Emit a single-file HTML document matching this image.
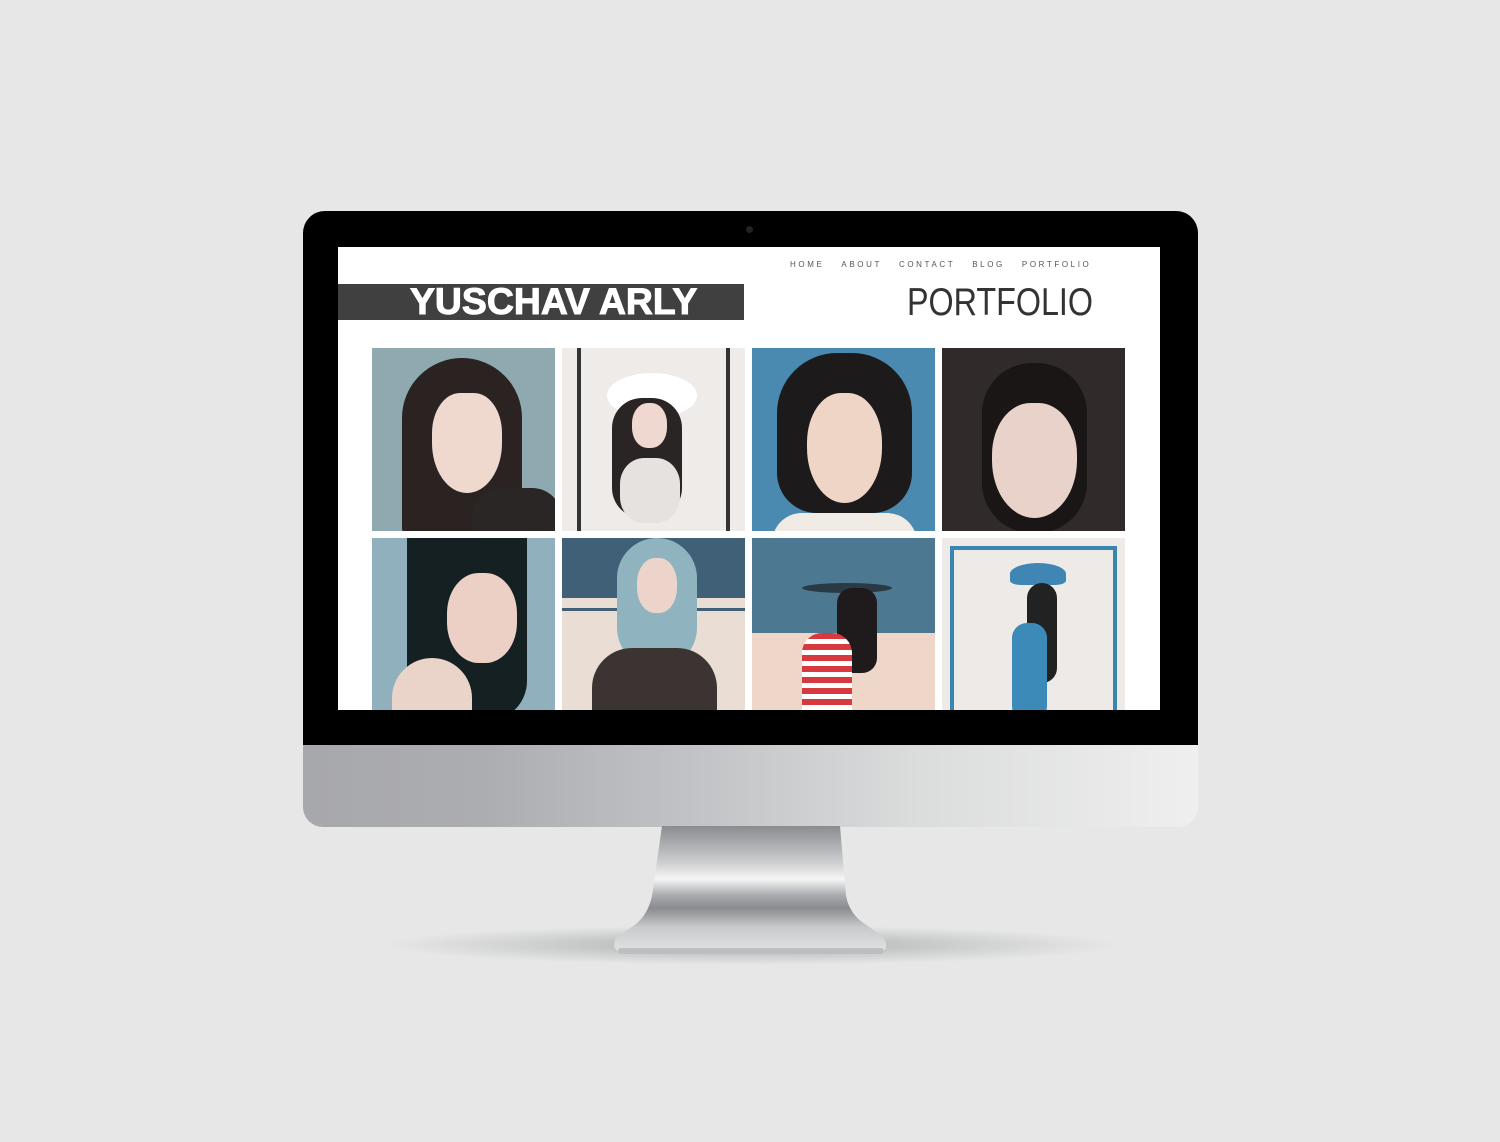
<!DOCTYPE html>
<html><head><meta charset="utf-8"><style>
*{margin:0;padding:0;box-sizing:border-box}
body{width:1500px;height:1142px;background:#e6e7e6;position:relative;overflow:hidden;font-family:"Liberation Sans",sans-serif}
.abs{position:absolute}
#bezel{left:303px;top:211px;width:895px;height:535px;background:#000;border-radius:22px 22px 0 0}
#chin{left:303px;top:745px;width:895px;height:82px;border-radius:0 0 20px 20px;background:linear-gradient(90deg,#a7a8ac 0%,#acadb1 20%,#c3c4c7 45%,#dcdddd 70%,#eeefee 100%)}
#screen{left:338px;top:247px;width:822px;height:463px;background:#fff;overflow:hidden}
#cam{left:746px;top:226px;width:7px;height:7px;border-radius:50%;background:#222}
.nav{position:absolute;top:13px;left:452px;font-size:8px;letter-spacing:2.6px;color:#555;white-space:nowrap}
.nav span{margin-right:17px}
#bar{left:0;top:37px;width:406px;height:36px;background:#404041}
#bar div{position:absolute;left:72px;top:-3px;color:#fff;font-weight:bold;font-size:37px;letter-spacing:0;transform:scaleX(1.01);transform-origin:left;-webkit-text-stroke:1px #fff;white-space:nowrap}
#pf{left:569px;top:34px;font-size:39px;font-weight:normal;color:#333;transform:scaleX(.828);transform-origin:left;white-space:nowrap}
.t{position:absolute;width:183px;height:183px;overflow:hidden}
.t div{position:absolute}
</style></head><body>
<div id="bezel" class="abs"></div>
<div id="cam" class="abs"></div>
<div id="screen" class="abs">
 <div class="nav"><span>HOME</span><span>ABOUT</span><span>CONTACT</span><span>BLOG</span><span>PORTFOLIO</span></div>
 <div id="bar" class="abs"><div>YUSCHAV ARLY</div></div>
 <div id="pf" class="abs">PORTFOLIO</div>
 <div class="t" style="left:34px;top:101px;background:#8fa9b0">
  <div style="left:30px;top:10px;width:120px;height:180px;background:#2a2322;border-radius:60px 60px 10px 10px"></div>
  <div style="left:60px;top:45px;width:70px;height:100px;background:#efd9cf;border-radius:40% 40% 50% 50%"></div>
  <div style="left:100px;top:140px;width:90px;height:50px;background:#2b2626;border-radius:30px 30px 0 0"></div>
 </div>
 <div class="t" style="left:224px;top:101px;background:#eeebe8">
  <div style="left:15px;top:0;width:4px;height:183px;background:#333"></div>
  <div style="left:164px;top:0;width:4px;height:183px;background:#333"></div>
  <div style="left:45px;top:25px;width:90px;height:45px;background:#fff;border-radius:50%"></div>
  <div style="left:50px;top:50px;width:70px;height:120px;background:#2a2424;border-radius:30px"></div>
  <div style="left:70px;top:55px;width:35px;height:45px;background:#eed8cf;border-radius:45%"></div>
  <div style="left:58px;top:110px;width:60px;height:65px;background:#e5e2e0;border-radius:40%"></div>
 </div>
 <div class="t" style="left:414px;top:101px;background:#4a8ab0">
  <div style="left:25px;top:5px;width:135px;height:160px;background:#1d1a1b;border-radius:60px 60px 40px 40px"></div>
  <div style="left:55px;top:45px;width:75px;height:110px;background:#efd5c6;border-radius:45% 45% 50% 50%"></div>
  <div style="left:20px;top:165px;width:145px;height:30px;background:#f1ebe6;border-radius:30px 30px 0 0"></div>
 </div>
 <div class="t" style="left:604px;top:101px;background:#302b2a">
  <div style="left:40px;top:15px;width:105px;height:170px;background:#1a1616;border-radius:50px"></div>
  <div style="left:50px;top:55px;width:85px;height:115px;background:#e8d2ca;border-radius:45% 45% 50% 50%"></div>
 </div>
 <div class="t" style="left:34px;top:291px;background:#8fb0bc">
  <div style="left:35px;top:0;width:120px;height:183px;background:#142022;border-radius:0 0 40px 40px"></div>
  <div style="left:75px;top:35px;width:70px;height:90px;background:#ecd0c5;border-radius:45%"></div>
  <div style="left:20px;top:120px;width:80px;height:70px;background:#ead3c8;border-radius:40px 40px 0 0"></div>
 </div>
 <div class="t" style="left:224px;top:291px;background:#e9ddd4">
  <div style="left:0;top:0;width:183px;height:60px;background:#3f6076"></div>
  <div style="left:0;top:70px;width:183px;height:3px;background:#3f6076"></div>
  <div style="left:55px;top:0;width:80px;height:130px;background:#8fb4c0;border-radius:40px"></div>
  <div style="left:75px;top:20px;width:40px;height:55px;background:#ecd4cb;border-radius:45%"></div>
  <div style="left:30px;top:110px;width:125px;height:80px;background:#3b3432;border-radius:40px 40px 0 0"></div>
 </div>
 <div class="t" style="left:414px;top:291px;background:#eed7c8">
  <div style="left:0;top:0;width:183px;height:95px;background:#4d7891"></div>
  <div style="left:50px;top:45px;width:90px;height:10px;background:#2a3a44;border-radius:50%"></div>
  <div style="left:85px;top:50px;width:40px;height:85px;background:#1f1a1b;border-radius:15px"></div>
  <div style="left:50px;top:95px;width:50px;height:90px;background:repeating-linear-gradient(180deg,#d63a3e 0 6px,#fff 6px 11px);border-radius:20px 20px 0 0"></div>
 </div>
 <div class="t" style="left:604px;top:291px;background:#eeeae7">
  <div style="left:8px;top:8px;width:167px;height:180px;border:4px solid #3a84b0"></div>
  <div style="left:68px;top:25px;width:56px;height:22px;background:#3f86b4;border-radius:50% 50% 20% 20%"></div>
  <div style="left:85px;top:45px;width:30px;height:100px;background:#222;border-radius:15px"></div>
  <div style="left:70px;top:85px;width:35px;height:98px;background:#3b8ab8;border-radius:15px"></div>
 </div>
</div>
<div id="chin" class="abs"></div>
<div class="abs" style="left:380px;top:925px;width:740px;height:40px;border-radius:50%;background:radial-gradient(ellipse at center,rgba(120,122,125,.55) 0%,rgba(150,152,155,.25) 45%,rgba(230,231,230,0) 70%)"></div>
<svg class="abs" style="left:600px;top:826px" width="300" height="132" viewBox="0 0 300 132">
 <defs><linearGradient id="g" x1="0" y1="0" x2="0" y2="1">
  <stop offset="0" stop-color="#8a8c90"/><stop offset=".3" stop-color="#d0d1d3"/><stop offset=".42" stop-color="#f6f6f6"/><stop offset=".55" stop-color="#a9abae"/><stop offset=".65" stop-color="#8a8b8e"/><stop offset=".8" stop-color="#c8c9cb"/><stop offset="1" stop-color="#e2e3e4"/></linearGradient></defs>
 <path d="M62 0 L240 0 L246 70 Q250 90 268 100 L284 112 Q290 124 280 126 L22 126 Q10 124 16 112 L36 98 Q48 88 52 70 Z" fill="url(#g)"/>
 <rect x="18" y="122" width="266" height="6" rx="3" fill="#bdbec0"/>
</svg>
</body></html>
